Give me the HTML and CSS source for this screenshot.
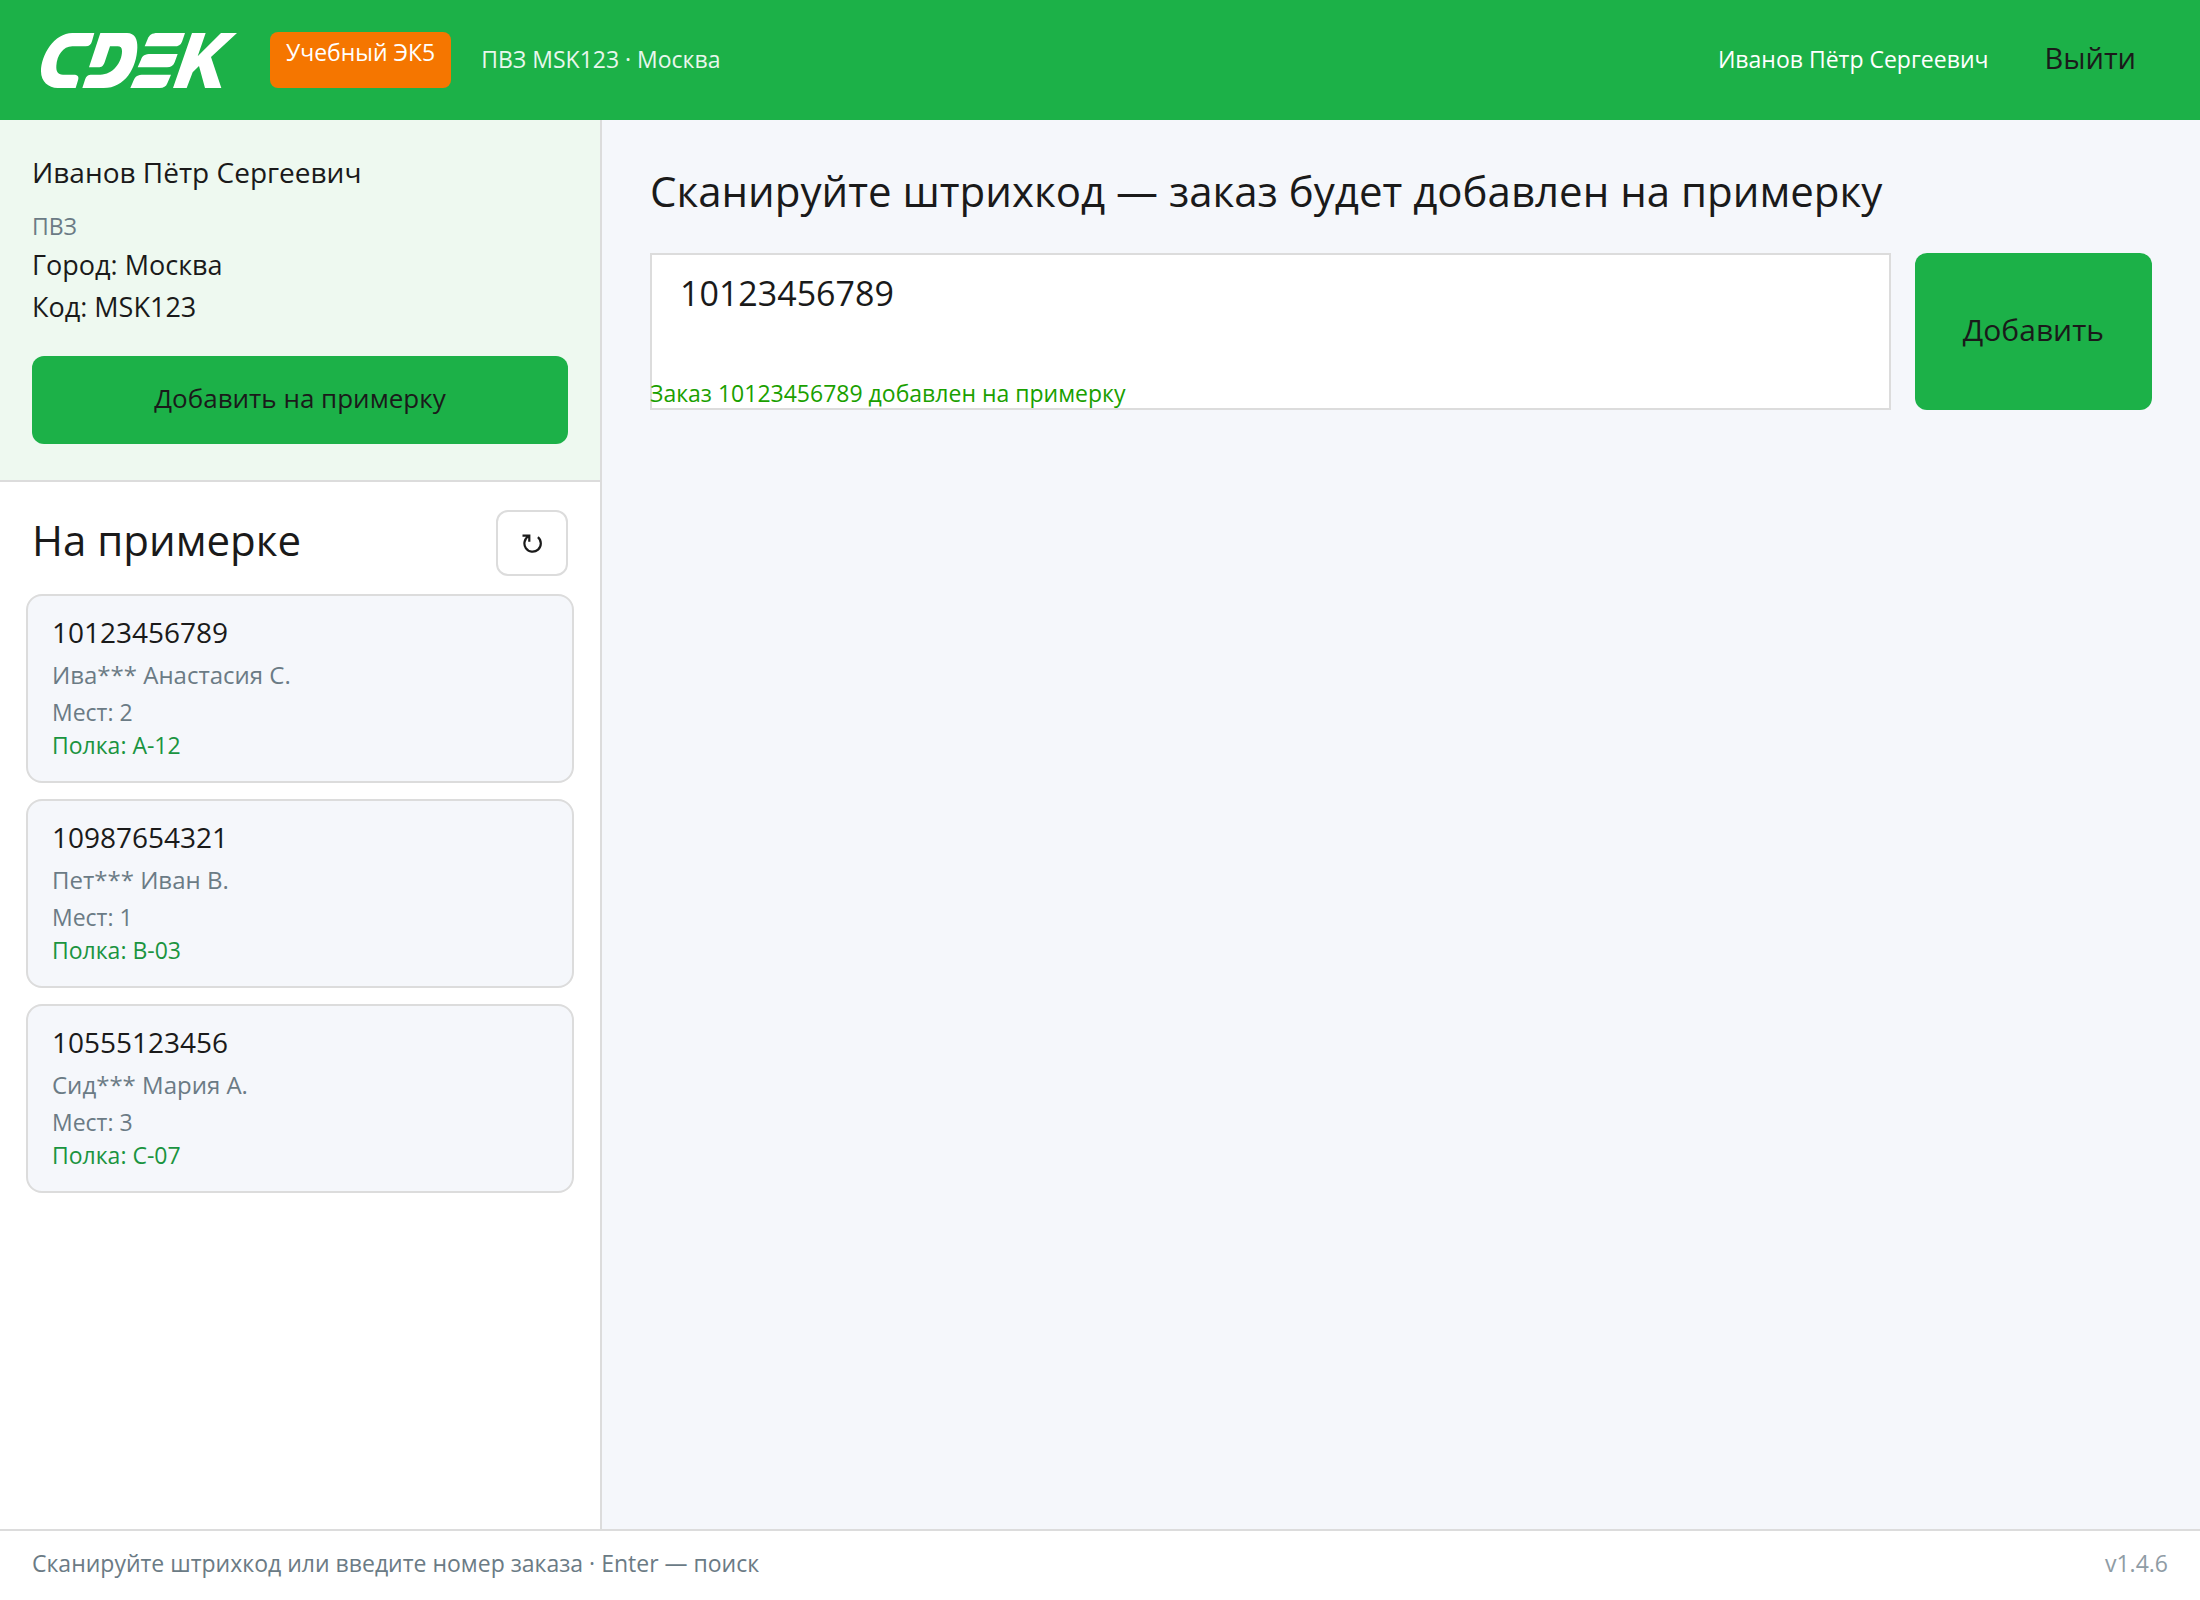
FILE: index.html
```html
<!DOCTYPE html>
<html lang="ru">
<head>
<meta charset="utf-8">
<meta name="viewport" content="width=device-width, initial-scale=1">
<title>СДЭК — примерка</title>
<link rel="stylesheet" href="styles.css">
</head>
<body>
<header class="topbar">
  <svg class="logo" viewBox="0 0 588 165" role="img" aria-label="CDEK" fill="currentColor">
    <path d="M160 0 L94 0 C40 0 0 66 0 115 C0 146 22 165 50 165 L104 165 L111 142 C115 130 109 125 98 125 L66 125 C50 125 45 114 46 98 C48 68 66 40 94 40 L134 40 C145 40 150 35 153 25 Z"/>
    <path d="M178 0 L258 0 C282 0 290 20 289 44 C287 104 252 165 188 165 L124 165 L132 140 C136 128 142 125 152 125 L178 125 C216 125 243 88 243 54 C243 44 238 40 230 40 L207 40 L191 88 C187 99 182 103 172 103 L144 103 Z"/>
    <path d="M432 0 L350 0 C332 0 325 6 320 18 L311 40 L400 40 C412 40 419 36 423 26 Z"/>
    <path d="M410 63 L330 63 C312 63 304 68 300 80 L290 103 L378 103 C390 103 397 98 401 88 Z"/>
    <path d="M390 125 L308 125 C290 125 283 130 278 142 L268 165 L356 165 C368 165 375 161 379 151 Z"/>
    <path d="M453 0 L494 0 L470 70 L540 0 L588 0 L510 72 L541 165 L492 165 L474 99 L455 118 L437 165 L396 165 Z"/>
  </svg>
  <span class="badge">Учебный ЭК5</span>
  <span class="office">ПВЗ MSK123 · Москва</span>
  <span class="user">Иванов Пётр Сергеевич</span>
  <button class="logout" type="button">Выйти</button>
</header>
<div class="workspace">
  <aside class="sidebar">
    <section class="profile">
      <p class="profile-name">Иванов Пётр Сергеевич</p>
      <p class="profile-label">ПВЗ</p>
      <p class="profile-line">Город: Москва</p>
      <p class="profile-line">Код: MSK123</p>
      <button class="primary" type="button">Добавить на примерку</button>
    </section>
    <section class="fitting">
      <div class="fitting-head">
        <h2 class="title">На примерке</h2>
        <button class="refresh" type="button" aria-label="Обновить">
          <svg class="refresh-icon" viewBox="0 0 20 20" fill="none" stroke="currentColor" stroke-width="2.200"><path d="M.5 2.600H7.300V8.800M7 3.100A8.200 8.200 0 1 0 15.900 4.200"/></svg>
        </button>
      </div>
      <ul class="orders">
        <li class="order">
          <p class="order-number">10123456789</p>
          <p class="order-client">Ива*** Анастасия С.</p>
          <p class="order-meta">Мест: 2</p>
          <p class="order-meta order-shelf">Полка: A-12</p>
        </li>
        <li class="order">
          <p class="order-number">10987654321</p>
          <p class="order-client">Пет*** Иван В.</p>
          <p class="order-meta">Мест: 1</p>
          <p class="order-meta order-shelf">Полка: B-03</p>
        </li>
        <li class="order">
          <p class="order-number">10555123456</p>
          <p class="order-client">Сид*** Мария А.</p>
          <p class="order-meta">Мест: 3</p>
          <p class="order-meta order-shelf">Полка: C-07</p>
        </li>
      </ul>
    </section>
  </aside>
  <main class="main">
    <h1 class="title"><label for="barcode">Сканируйте штрихкод — заказ будет добавлен на примерку</label></h1>
    <form class="scan">
      <div class="scan-field">
        <input class="scan-input" id="barcode" type="text" value="10123456789">
        <output class="scan-status" for="barcode">Заказ 10123456789 добавлен на примерку</output>
      </div>
      <button class="scan-add" type="button">Добавить</button>
    </form>
  </main>
</div>
<footer class="footer">
  <span>Сканируйте штрихкод или введите номер заказа · Enter — поиск</span>
  <span class="version">v1.4.6</span>
</footer>
</body>
</html>
```
FILE: styles.css
```css
:root {
  --green: #1cb148;
  --ink: #1a1a1a;
  --muted: #6b7b85;
  --line: #dcdcdc;
  --surface: #f5f7fb;
}

* { box-sizing: border-box; }

body {
  margin: 0;
  min-height: 100vh;
  display: flex;
  flex-direction: column;
  background: var(--surface);
  color: var(--ink);
  font-family: "Segoe UI", "Open Sans", "Noto Sans", sans-serif;
  font-size: 23px;
  line-height: 32px;
}

p, h1, h2, ul { margin: 0; padding: 0; }

button, input {
  font-family: inherit;
  color: inherit;
  border: 0;
}

button { cursor: pointer; }

.topbar {
  display: flex;
  align-items: center;
  height: 120px;
  padding: 0 32px 0 41px;
  background: var(--green);
  color: #fff;
}

.logo { width: 196px; height: 55px; }

.badge {
  height: 56px;
  margin-left: 33px;
  padding: 4px 16px;
  border-radius: 8px;
  background: #f57600;
}

.office,
.user { padding-bottom: 3px; }

.office { margin-left: 30px; color: #e8f7ed; }

.user { margin-left: auto; }

.logout {
  margin-left: 24px;
  padding: 14px 32px 18px;
  background: transparent;
  color: var(--ink);
  font-size: 29px;
  line-height: 40px;
}

.workspace { flex: 1; display: flex; }

.sidebar {
  flex: 0 0 602px;
  border-right: 2px solid var(--line);
  background: #fff;
}

.profile {
  padding: 32px 32px 36px;
  border-bottom: 2px solid var(--line);
  background: #eef9f0;
}

.profile-name { font-size: 28px; line-height: 40px; }
.profile-label { margin: 18px 0 2px; color: var(--muted); }
.profile-line { font-size: 27px; line-height: 42px; }

.primary {
  display: block;
  width: 100%;
  height: 88px;
  margin-top: 28px;
  padding: 0 0 4px;
  border-radius: 12px;
  background: var(--green);
  font-size: 26px;
}

.fitting { padding: 28px 26px; }

.fitting-head {
  display: flex;
  align-items: flex-start;
  justify-content: space-between;
  padding: 0 6px;
}

.title { font-size: 42px; line-height: 60px; font-weight: 400; }

.refresh {
  display: grid;
  place-items: center;
  width: 72px;
  height: 66px;
  padding: 0;
  border: 2px solid var(--line);
  border-radius: 12px;
  background: #fff;
}

.refresh-icon { width: 20px; height: 20px; }

.orders {
  display: flex;
  flex-direction: column;
  gap: 16px;
  margin-top: 18px;
  list-style: none;
}

.order {
  padding: 16px 24px 19px;
  border: 2px solid var(--line);
  border-radius: 16px;
  background: var(--surface);
}

.order-number { font-size: 28px; line-height: 41px; }
.order-client { font-size: 24px; line-height: 43px; color: var(--muted); }
.order-meta { line-height: 33px; color: var(--muted); }
.order-shelf { color: #1a9440; }

.main { flex: 1; padding: 41px 48px; }

.scan { display: flex; gap: 24px; margin-top: 32px; }

.scan-field { position: relative; flex: 1; }

.scan-input {
  display: block;
  width: 100%;
  height: 157px;
  padding: 14px 28px 92px;
  border: 2px solid var(--line);
  background: #fff;
  font-size: 34px;
  line-height: 48px;
}

.scan-status {
  position: absolute;
  left: 0;
  bottom: 1px;
  color: #1aa000;
}

.scan-add {
  padding: 0 48px 4px;
  border-radius: 12px;
  background: var(--green);
  font-size: 30px;
}

.footer {
  display: flex;
  justify-content: space-between;
  padding: 16px 32px 21px;
  border-top: 2px solid var(--line);
  background: #fff;
  color: var(--muted);
}

.version { color: #8f9ca5; }
```
